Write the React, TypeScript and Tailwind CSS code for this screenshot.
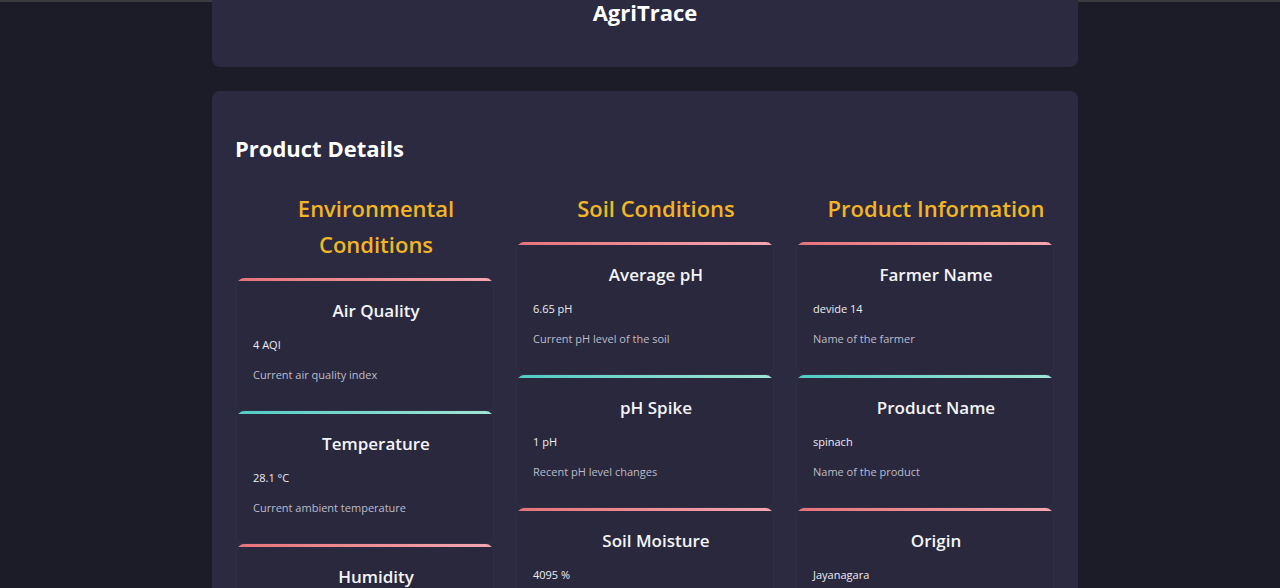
const columns = [
  {
    title: 'Environmental Conditions',
    items: [
      { name: 'Air Quality', value: '4 AQI', desc: 'Current air quality index' },
      { name: 'Temperature', value: '28.1 °C', desc: 'Current ambient temperature' },
      { name: 'Humidity', value: '62 %', desc: 'Current relative humidity' },
    ],
  },
  {
    title: 'Soil Conditions',
    items: [
      { name: 'Average pH', value: '6.65 pH', desc: 'Current pH level of the soil' },
      { name: 'pH Spike', value: '1 pH', desc: 'Recent pH level changes' },
      { name: 'Soil Moisture', value: '4095 %', desc: 'Current soil moisture level' },
    ],
  },
  {
    title: 'Product Information',
    items: [
      { name: 'Farmer Name', value: 'devide 14', desc: 'Name of the farmer' },
      { name: 'Product Name', value: 'spinach', desc: 'Name of the product' },
      { name: 'Origin', value: 'Jayanagara', desc: 'Place of origin' },
    ],
  },
];

function InfoCard({ name, value, desc, index }: { name: string; value: string; desc: string; index: number }) {
  const teal = index % 2 === 1;
  return (
    <div className="rounded-lg overflow-hidden bg-[#29283d] border-x border-b border-[#302f46]">
      <div
        className={
          teal
            ? 'h-[3px] bg-gradient-to-r from-[#4ecdc4] to-[#a0e4d4]'
            : 'h-[3px] bg-gradient-to-r from-[#e8737a] to-[#f4a7b0]'
        }
      />
      <div className="px-4 pt-4 pb-[26px]">
        <h4 className="text-center pl-[22px] text-[17px] leading-[27px] font-semibold text-[#f4f4f8] mb-3">{name}</h4>
        <p className="text-[11px] leading-[18px] text-[#ececf2] mb-3">{value}</p>
        <p className="text-[11px] leading-[18px] text-[#bdbccb]">{desc}</p>
      </div>
    </div>
  );
}

export default function App() {
  return (
    <div
      className="h-[588px] overflow-hidden bg-[#1c1b28] text-white pl-[212px]"
      style={{ fontFamily: '"Open Sans", "Noto Sans", sans-serif' }}
    >
      <div className="h-[2px] bg-[#3a3a40] -ml-[212px]" />
      <div className="w-[866px]">
        {/* Header */}
        <div className="-mt-[2px] rounded-b-lg bg-[#2b2a40] h-[67px]">
          <h1 className="text-center text-[22px] leading-[24px] font-bold">AgriTrace</h1>
        </div>

        {/* Product details */}
        <div className="mt-6 rounded-lg bg-[#2b2a40] px-6 pt-[41px] pb-10">
          <h2 className="text-[22px] leading-[32px] font-bold mb-[26px] -ml-px">Product Details</h2>
          <div className="grid grid-cols-3 gap-[22px]">
            {columns.map((col) => (
              <div key={col.title} className="flex flex-col">
                <h3 className="text-center pl-[22px] text-[22px] leading-[36px] font-semibold text-[#f2b525] mb-4">
                  {col.title}
                </h3>
                <div className="flex flex-col">
                  {col.items.map((item, i) => (
                    <InfoCard key={item.name} index={i} {...item} />
                  ))}
                </div>
              </div>
            ))}
          </div>
        </div>
      </div>
    </div>
  );
}
